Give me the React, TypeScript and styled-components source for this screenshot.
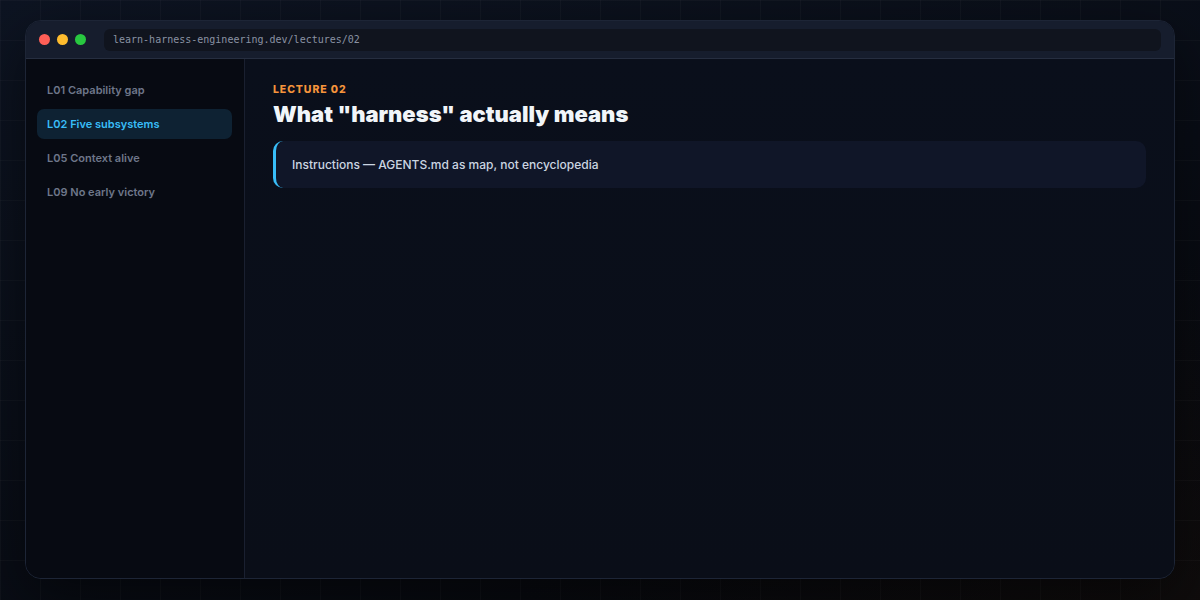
import React from 'react'
import styled, { createGlobalStyle } from 'styled-components'

const GlobalStyle = createGlobalStyle`
  html, body {
    margin: 0;
    padding: 0;
    width: 1200px;
    height: 600px;
    overflow: hidden;
    background: #080b12;
  }
  body {
    font-family: Inter, "Noto Sans", sans-serif;
    -webkit-font-smoothing: antialiased;
  }
`

const lectures = [
  { id: 'L01', title: 'Capability gap' },
  { id: 'L02', title: 'Five subsystems', active: true },
  { id: 'L05', title: 'Context alive' },
  { id: 'L09', title: 'No early victory' },
]

export default function App(): JSX.Element {
  return (
    <>
      <GlobalStyle />
      <Stage>
        <Window>
          <TitleBar>
            <Dots>
              <Dot $color="#ff5f57" />
              <Dot $color="#febc2e" />
              <Dot $color="#28c840" />
            </Dots>
            <UrlBar>learn-harness-engineering.dev/lectures/02</UrlBar>
          </TitleBar>
          <Body>
            <Sidebar>
              {lectures.map((l) => (
                <NavItem key={l.id} $active={!!l.active}>
                  {l.id} {l.title}
                </NavItem>
              ))}
            </Sidebar>
            <Main>
              <Eyebrow>Lecture 02</Eyebrow>
              <Title>What "harness" actually means</Title>
              <Callout>Instructions — AGENTS.md as map, not encyclopedia</Callout>
            </Main>
          </Body>
        </Window>
      </Stage>
    </>
  )
}

const Stage = styled.div`
  width: 1200px;
  height: 600px;
  box-sizing: border-box;
  padding: 20px 25px 21px;
  display: flex;
  background-color: #080b12;
  background-image:
    linear-gradient(rgba(255, 255, 255, 0.028) 1px, transparent 1px),
    linear-gradient(90deg, rgba(255, 255, 255, 0.028) 1px, transparent 1px),
    radial-gradient(ellipse at 100% 100%, rgba(40, 28, 22, 0.25), transparent 40%),
    linear-gradient(160deg, #0d1422 0%, #090d16 55%, #070709 100%);
  background-size: 40px 40px, 40px 40px, 100% 100%, 100% 100%;
  background-position: 0 0, 0 0, 0 0, 0 0;
`

const Window = styled.div`
  flex: 1;
  display: flex;
  flex-direction: column;
  border: 1px solid #1d2536;
  border-radius: 16px;
  overflow: hidden;
  background: #0a0f1a;
  box-shadow: 0 20px 60px rgba(0, 0, 0, 0.5);
`

const TitleBar = styled.div`
  height: 37px;
  flex-shrink: 0;
  display: flex;
  align-items: center;
  padding: 0 13px;
  background: #161d2d;
  border-bottom: 1px solid #262e40;
`

const Dots = styled.div`
  display: flex;
  gap: 7px;
  margin-right: 18px;
`

const Dot = styled.span<{ $color: string }>`
  width: 11px;
  height: 11px;
  border-radius: 50%;
  background: ${(p) => p.$color};
`

const UrlBar = styled.div`
  flex: 1;
  height: 22px;
  display: flex;
  align-items: center;
  padding: 0 9px;
  border-radius: 6px;
  background: #10141e;
  color: #8a92a3;
  font-family: "DejaVu Sans Mono", "Liberation Mono", monospace;
  font-size: 10px;
`

const Body = styled.div`
  flex: 1;
  display: flex;
  min-height: 0;
`

const Sidebar = styled.nav`
  width: 219px;
  flex-shrink: 0;
  box-sizing: border-box;
  padding: 16px 12px 16px 11px;
  display: flex;
  flex-direction: column;
  gap: 4px;
  background: #070a12;
  border-right: 1px solid #1a2030;
`

const NavItem = styled.div<{ $active: boolean }>`
  height: 30px;
  display: flex;
  align-items: center;
  padding: 0 10px;
  border-radius: 7px;
  font-size: 11px;
  font-weight: 600;
  color: ${(p) => (p.$active ? '#38bdf8' : '#6e778a')};
  background: ${(p) => (p.$active ? '#0e2233' : 'transparent')};
`

const Main = styled.main`
  flex: 1;
  padding: 25px 28px;
  display: flex;
  flex-direction: column;
  align-items: stretch;
  background: linear-gradient(180deg, #0a0f1b 0%, #0a0e18 100%);
`

const Eyebrow = styled.div`
  font-size: 10.5px;
  font-weight: 800;
  letter-spacing: 0.9px;
  text-transform: uppercase;
  color: #f6943b;
  line-height: 12px;
`

const Title = styled.h1`
  margin: 4px 0 13px;
  font-size: 22px;
  font-weight: 900;
  line-height: 28px;
  color: #f1f5f9;
  letter-spacing: 0;
`

const Callout = styled.div`
  padding: 16px 16px;
  border-radius: 10px;
  border-left: 3px solid #38bdf8;
  background: #101628;
  font-size: 12px;
  font-weight: 500;
  line-height: 15px;
  color: #cbd5e1;
`
